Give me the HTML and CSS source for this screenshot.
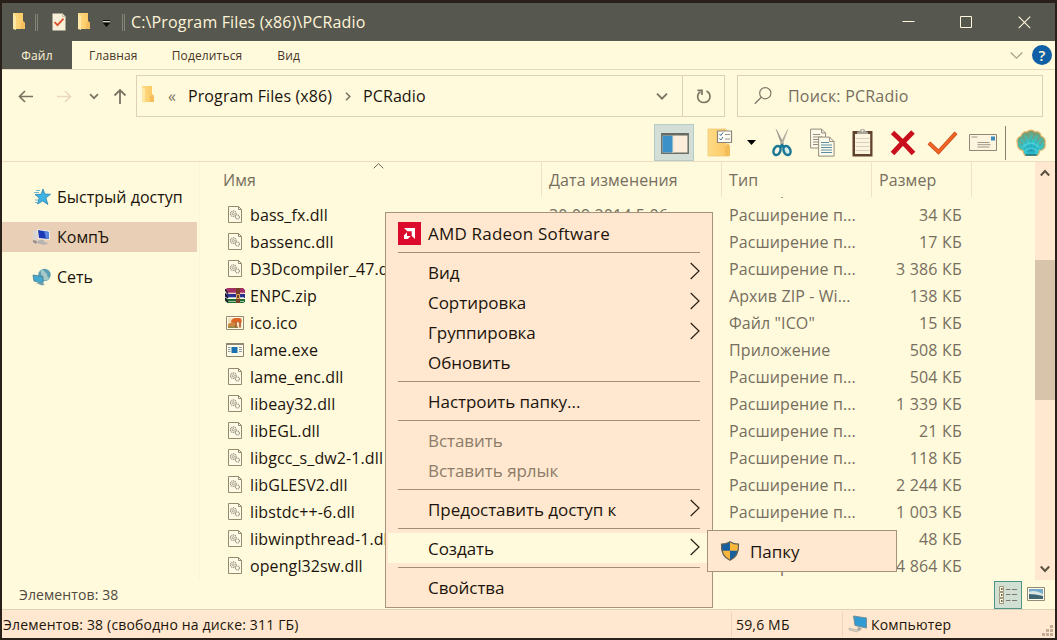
FILE: index.html
```
<!DOCTYPE html>
<html lang="ru">
<head>
    <meta charset="UTF-8">
    <title>C:\Program Files (x86)\PCRadio</title>
    <link rel="stylesheet" href="styles.css">
</head>
<body>
    <svg class="sprite">
        <linearGradient id="gold" x1="0" x2="1"><stop offset="0" stop-color="#ffdc86"/><stop offset="1" stop-color="#fbc55f"/></linearGradient>
        <radialGradient id="shellFill" cx=".5" cy=".75" r=".7"><stop offset="0" stop-color="#1aa5c4"/><stop offset=".35" stop-color="#35c5cf"/><stop offset=".7" stop-color="#4bb8a4"/><stop offset="1" stop-color="#7d9a6e"/></radialGradient>
        <symbol id="folder" viewBox="0 0 14 18">
            <path d="M1 0h10v8l2 2v6H1z" fill="url(#gold)"/>
            <path d="M1 1l3 2v14l-3-1z" fill="#ffe7a6"/>
            <path d="M9 16V11l2-2.500 2 1.500v6z" fill="#f6bd5c"/>
        </symbol>
        <symbol id="dll" viewBox="0 0 20 20">
            <path d="M3.500 1.500h10l3 3v13h-13z" fill="#fffbe6" stroke="#958a6e"/>
            <path d="M13.500 1.500v3h3" fill="none" stroke="#958a6e"/>
            <circle cx="8.300" cy="8.700" r="2.800" fill="none" stroke="#97907f" stroke-width="1.200" stroke-dasharray="1.200 .6"/>
            <circle cx="8.300" cy="8.700" r="1.100" fill="none" stroke="#97907f" stroke-width=".8"/>
            <circle cx="12.400" cy="12" r="2" fill="none" stroke="#97907f" stroke-width="1.200" stroke-dasharray="1 .5"/>
        </symbol>
        <symbol id="zip" viewBox="0 0 20 20">
            <path d="M0 3l3-1h15l2 2v3H3z" fill="#a02f62"/>
            <path d="M1 5l3 1.500h15v1H3z" fill="#e0a0b5"/>
            <path d="M0 7l3 1h17v4H3L0 11z" fill="#2b3390"/>
            <path d="M2 10.500l2 .5h15v1H3z" fill="#b9bfdd"/>
            <path d="M0 12l3 1h17v3l-2 1H3l-3-2z" fill="#226b35"/>
            <path d="M3 15h16v1H3z" fill="#9cc295"/>
            <path d="M0 3.500l3 4M0 8l3 4M0 12l3 4.500" stroke="#22182a" stroke-width="1.500"/>
            <path d="M11 2h4v15h-4z" fill="#7a3f28"/>
            <path d="M11.500 8.500h3v4h-3z" fill="none" stroke="#d6ad5a"/>
        </symbol>
        <symbol id="ico" viewBox="0 0 20 20">
            <path d="M1.500 3.500h17v13h-17z" fill="#fffbe6" stroke="#958a6e"/>
            <path d="M3 5h14v10H3z" fill="#f6e3bd"/>
            <path d="M6 9c0-2 2-4 5-4h4c2 1 2 3 1 5l-4-1-4 2z" fill="#dd6424"/>
            <path d="M3 11l5-2 4 3-3 3H3z" fill="#ce8740"/>
            <path d="M3 13.500h10V15H3z" fill="#8d8a4c"/>
            <path d="M11 9v5.500M15 9v5.500" stroke="#a8532b" stroke-width="1.500"/>
        </symbol>
        <symbol id="exe" viewBox="0 0 20 20">
            <path d="M1.500 3.500h17v13h-17z" fill="#fffbe6" stroke="#8b8572"/>
            <path d="M1.500 4h17" stroke="#8b8572" stroke-width="2"/>
            <path d="M6.500 7h6v6h-6z" fill="#1a70b0"/>
            <path d="M3 7.500h2.500M3 9.500h2.500M3 11.500h2.500M14 7.500h3M14 9.500h3M14 11.500h3" stroke="#8f99a0"/>
        </symbol>
        <symbol id="sub" viewBox="0 0 10 18"><path d="M.7 1l8.300 8-8.300 8" fill="none" stroke="#2a1f14" stroke-width="1.200"/></symbol>
    </svg>

    <div class="window">
        <div class="titlebar">
            <svg class="title-folder" width="14" height="18"><use href="#folder"/></svg>
            <span class="divider"></span>
            <svg class="title-check" width="14" height="18" viewBox="0 0 14 18">
                <path d="M.5.5h10l3 3v14H.5z" fill="#f8efd8"/>
                <path d="M10.500.5v3h3" fill="none" stroke="#c9bb9a"/>
                <path d="M2.500 9l3 3.200 6-6.500" fill="none" stroke="#d9512c" stroke-width="1.800"/>
            </svg>
            <svg class="title-new" width="14" height="18"><use href="#folder"/></svg>
            <svg class="title-more" width="9" height="8" viewBox="0 0 9 8">
                <path d="M1 .5h7" stroke="#0c0c0a"/>
                <path d="M1 1.500h7" stroke="#d9d5c0"/>
                <path d="M1 3h7L4.500 7z" fill="#0c0c0a"/>
            </svg>
            <span class="divider"></span>
            <span class="title">C:\Program Files (x86)\PCRadio</span>
            <div class="controls">
                <svg width="13" height="13"><path d="M.5 5.500h12" stroke="#fff8dc"/></svg>
                <svg width="13" height="13"><path d="M.5.5h11v11H.5z" fill="none" stroke="#fff8dc"/></svg>
                <svg width="13" height="13"><path d="M.7.700l11.500 11.500M12.200.7L.7 12.200" stroke="#fff8dc" stroke-width="1.100"/></svg>
            </div>
        </div>

        <div class="ribbon">
            <span class="tab file">Файл</span>
            <span class="tab home">Главная</span>
            <span class="tab share">Поделиться</span>
            <span class="tab view">Вид</span>
            <svg class="expand" width="13" height="9"><path d="M.7 1.500l5.800 5.700 5.800-5.700" fill="none" stroke="#a99f8a" stroke-width="1.200"/></svg>
            <span class="help">?</span>
        </div>

        <div class="address-row">
            <div class="nav">
                <svg width="16" height="14" viewBox="0 0 16 14"><path d="M15 7.500H1.500M7 2L1.500 7.500 7 13" fill="none" stroke="#7c7462" stroke-width="1.700"/></svg>
                <svg width="16" height="14" viewBox="0 0 16 14"><path d="M1 7.500h13.500M9 2L14.500 7.500 9 13" fill="none" stroke="#ecd9bd" stroke-width="1.600"/></svg>
                <svg width="10" height="8" viewBox="0 0 10 8"><path d="M1 2.200l4 4 4-4" fill="none" stroke="#7c7462" stroke-width="1.700"/></svg>
                <svg width="14" height="16" viewBox="0 0 14 16"><path d="M7 16V2M1.500 7.500L7 2 12.500 7.500" fill="none" stroke="#7c7462" stroke-width="1.800"/></svg>
            </div>
            <div class="address">
                <svg class="addr-folder" width="14" height="18"><use href="#folder"/></svg>
                <span class="back-crumbs">«</span>
                <span class="crumb">Program Files (x86)</span>
                <svg class="crumb-arrow" width="6" height="9"><path d="M1 .7L4.800 4.500 1 8.300" fill="none" stroke="#7c7462" stroke-width="1.600"/></svg>
                <span class="crumb">PCRadio</span>
                <svg class="addr-down" width="12" height="8"><path d="M1 1.700l5 5 5-5" fill="none" stroke="#7c7462" stroke-width="1.900"/></svg>
                <div class="refresh">
                    <svg width="16" height="16" viewBox="0 0 16 16"><path d="M4.500 4C2.500 5 1.500 7 1.700 9.300c.4 3 3 5.200 6.300 5.200s6-2.500 6-5.800C14 6 12.500 4 10.500 3M1.500 2.300H6V7" fill="none" stroke="#7c7462" stroke-width="1.700"/></svg>
                </div>
            </div>
            <div class="search">
                <svg width="18" height="18" viewBox="0 0 18 18"><circle cx="11.300" cy="6.200" r="5.600" fill="none" stroke="#80786a" stroke-width="1.200"/><path d="M7.300 10.200L.8 16.700" stroke="#80786a" stroke-width="1.300"/></svg>
                <span>Поиск: PCRadio</span>
            </div>
        </div>

        <div class="toolbar">
            <div class="tool panes">
                <svg width="28" height="21" viewBox="0 0 28 21">
                    <path d="M.8.8h26.400v19.400H.8z" fill="#fdeedb" stroke="#6b6f66" stroke-width="1.500"/>
                    <path d="M1.500 2.500h10.500v17H1.500z" fill="#3c92c8"/>
                    <path d="M12 2v18" stroke="#e5e2d0"/>
                    <path d="M1 1.500h26" stroke="#676a62" stroke-width="2"/>
                </svg>
            </div>
            <svg class="tool organize" width="26" height="29" viewBox="0 0 26 29">
                <path d="M1 1h18v16l3 3v8H1z" fill="url(#gold)" stroke="#f0c878" stroke-width=".8"/>
                <path d="M18 28v-9l3-4 2 3v10z" fill="#f3bd59"/>
                <path d="M10.500 3h14v11.500h-14z" fill="#fffdf3" stroke="#8a8578" stroke-width="1.200"/>
                <path d="M12.500 6l1.300 1.500 2.200-3M12.500 10.500l1.300 1.500 2.200-3" fill="none" stroke="#3a6ea8"/>
                <path d="M18 6.500h5M18 11h5" stroke="#99948a"/>
            </svg>
            <svg class="tool more" width="9" height="5"><path d="M0 0h9L4.500 5z" fill="#000"/></svg>
            <svg class="tool cut" width="20" height="29" viewBox="0 0 20 29">
                <path d="M3.500.5L5 2l7 14-2.500 1z" fill="#9c9890"/>
                <path d="M16.500.5L15 2 8 16l2.500 1z" fill="#b4afa3"/>
                <ellipse cx="5" cy="22.500" rx="3.300" ry="4.700" transform="rotate(22 5 22.500)" fill="#fbf7e4" stroke="#1a7796" stroke-width="2.500"/>
                <ellipse cx="15" cy="22.500" rx="3.300" ry="4.700" transform="rotate(-22 15 22.500)" fill="#d8f0ec" stroke="#1a7796" stroke-width="2.500"/>
                <path d="M6 18.500l4-3 4 3-4 1.500z" fill="#1a7796"/>
            </svg>
            <svg class="tool copy" width="25" height="29" viewBox="0 0 25 29">
                <path d="M.6 1.100h11l4 4V20H.6z" fill="#fffbea" stroke="#948d7d"/>
                <path d="M11.600 1v4h4M3 6.500h7M3 9h10M3 11.500h10M3 14h6M3 16.500h5" fill="none" stroke="#948d7d"/>
                <path d="M8.600 9.100h11l4.500 4.500v14.500H8.600z" fill="#fffbea" stroke="#948d7d"/>
                <path d="M19.600 9v4.500h4.500" fill="none" stroke="#948d7d"/>
                <path d="M11 14.500h8M11 17h11M11 19.500h11M11 22h11M11 24.500h11" stroke="#5a8ca6"/>
            </svg>
            <svg class="tool paste" width="21" height="29" viewBox="0 0 21 29">
                <path d="M.5 3h20v25.500H.5z" fill="#60432f"/>
                <path d="M3 6h15.200v20H3z" fill="#fbf4df"/>
                <path d="M3.500 10.500h14M3.500 14.500h14M3.500 18.500h14M3.500 22.500h14" stroke="#ddceb9"/>
                <path d="M5 6V4l3-1c0-3 5-3 5 0l3 1v2z" fill="#a8a49a"/>
                <circle cx="10.500" cy="2.500" r="1" fill="#fffadc"/>
            </svg>
            <svg class="tool delete" width="26" height="26" viewBox="0 0 26 26"><path d="M2.500 2.500Q12 11 23.500 23.500M23 2Q14 11 2.500 23.500" fill="none" stroke="#c90f1c" stroke-width="5"/></svg>
            <svg class="tool rename" width="31" height="24" viewBox="0 0 31 24"><path d="M2 12l9.500 9L29 1.800" fill="none" stroke="#c64d20" stroke-width="4"/><path d="M2 12l9.500 9L29 1.800" fill="none" stroke="#f06424" stroke-width="2.600"/></svg>
            <svg class="tool mail" width="28" height="17" viewBox="0 0 28 17">
                <path d="M.5.5h27v16H.5z" fill="#fdf5df" stroke="#8f8877"/>
                <path d="M22 2.500h4v4h-4z" fill="#3d8bc0"/>
                <path d="M2.500 3h6M8.500 8.500h12M8.500 10.700h13M8.500 13h12" stroke="#a09888"/>
            </svg>
            <span class="tool-sep"></span>
            <svg class="tool shell" width="30" height="28" viewBox="0 0 30 28">
                <path d="M9 26.500c-1-1-2-2.500-2-5-4 0-6-4-5.500-7C0 11 2 8 5 7c1-3 4-5 6-4 2-2.500 6-2.500 8 0 3-1 6 1 6 4 3 1 5 4 4 7 1 4-1 7.500-5.500 7.500 0 2-1 4-2 5z" fill="url(#shellFill)" stroke="#e6b36a" stroke-width="1.200"/>
                <path d="M7 15L3 12M9 12L7 7.500M13 10l-1.500-6M17 10l1.500-6M21 12l3-4.500M23 15l4-3" stroke="#a77f58" opacity=".7"/>
                <path d="M13 24L5 15M14 23L9 12M15 23V10M16 23l5-11M17 24l8-9" stroke="#2b9aa5" opacity=".6"/>
                <path d="M7 18q8-8 16 0M9 22q6-6 12 0" fill="none" stroke="#58dce0" stroke-width="1.200" opacity=".7"/>
                <path d="M9.500 26h11" stroke="#17707d" stroke-width="1.500"/>
            </svg>
        </div>

        <div class="content">
            <div class="sidebar">
                <div class="place">
                    <svg width="20" height="20" viewBox="0 0 20 20"><path d="M11 2l1.800 5 5.700.3-4.600 3.600 2 6.600-5.200-3.500-5.200 3 1.700-6L3 7.500l6-.2z" fill="#3fb4e2" stroke="#2a83b2" stroke-width=".8"/><path d="M4 3.500h4M2 5.500h5M3 13h3M3 15.500h2" stroke="#70b7ce"/></svg>
                    <span>Быстрый доступ</span>
                </div>
                <div class="place selected">
                    <svg width="20" height="20" viewBox="0 0 20 20"><path d="M1 4l4-1v12l-4-3z" fill="#d9d6d1"/><path d="M5 2l13 2v9L6 12z" fill="#f0ece6"/><path d="M6 3l11 2v7L7 11z" fill="#1b39b5"/><path d="M12 4l5 1v7l-3-.4z" fill="#5a83e0"/><path d="M7 13l5 0v2l5 1-5 2-8-2z" fill="#b8b4b2"/><path d="M1 13l4 1-1 3-3-2z" fill="#948d8b"/></svg>
                    <span>КомпЪ</span>
                </div>
                <div class="place">
                    <svg width="20" height="20" viewBox="0 0 20 20"><circle cx="12.500" cy="8" r="6.200" fill="#5d9eb5"/><path d="M9 3c3-1 3 2 5 3s0 4 4 5c-2 3-6 3-8 1 1-3-2-5-1-9z" fill="#a5c9c6"/><path d="M1 8l10 1.500v7L2 14z" fill="#45aad0" stroke="#47788f" stroke-width=".8"/><path d="M4 16l6 2.500 3-1-3-1.500z" fill="#7a9faa"/></svg>
                    <span>Сеть</span>
                </div>
            </div>

            <div class="files">
                <div class="columns">
                    <svg class="sort" width="11" height="6"><path d="M.7 5.300l4.800-4.600 4.800 4.600" fill="none" stroke="#6f675a"/></svg>
                    <span class="col name">Имя</span>
                    <span class="col date">Дата изменения</span>
                    <span class="col type">Тип</span>
                    <span class="col size">Размер</span>
                </div>
                <div class="rows">
                    <div class="row"><span class="name"></span><span class="date"></span><span class="type">Расширение п...</span><span class="size"></span></div>
                    <div class="row"><span class="name"><svg><use href="#dll"/></svg>bass_fx.dll</span><span class="date">30.09.2014 5:06</span><span class="type">Расширение п...</span><span class="size">34 КБ</span></div>
                    <div class="row"><span class="name"><svg><use href="#dll"/></svg>bassenc.dll</span><span class="date"></span><span class="type">Расширение п...</span><span class="size">17 КБ</span></div>
                    <div class="row"><span class="name"><svg><use href="#dll"/></svg>D3Dcompiler_47.dll</span><span class="date"></span><span class="type">Расширение п...</span><span class="size">3 386 КБ</span></div>
                    <div class="row"><span class="name"><svg><use href="#zip"/></svg>ENPC.zip</span><span class="date"></span><span class="type">Архив ZIP - Wi...</span><span class="size">138 КБ</span></div>
                    <div class="row"><span class="name"><svg><use href="#ico"/></svg>ico.ico</span><span class="date"></span><span class="type">Файл "ICO"</span><span class="size">15 КБ</span></div>
                    <div class="row"><span class="name"><svg><use href="#exe"/></svg>lame.exe</span><span class="date"></span><span class="type">Приложение</span><span class="size">508 КБ</span></div>
                    <div class="row"><span class="name"><svg><use href="#dll"/></svg>lame_enc.dll</span><span class="date"></span><span class="type">Расширение п...</span><span class="size">504 КБ</span></div>
                    <div class="row"><span class="name"><svg><use href="#dll"/></svg>libeay32.dll</span><span class="date"></span><span class="type">Расширение п...</span><span class="size">1 339 КБ</span></div>
                    <div class="row"><span class="name"><svg><use href="#dll"/></svg>libEGL.dll</span><span class="date"></span><span class="type">Расширение п...</span><span class="size">21 КБ</span></div>
                    <div class="row"><span class="name"><svg><use href="#dll"/></svg>libgcc_s_dw2-1.dll</span><span class="date"></span><span class="type">Расширение п...</span><span class="size">118 КБ</span></div>
                    <div class="row"><span class="name"><svg><use href="#dll"/></svg>libGLESV2.dll</span><span class="date"></span><span class="type">Расширение п...</span><span class="size">2 244 КБ</span></div>
                    <div class="row"><span class="name"><svg><use href="#dll"/></svg>libstdc++-6.dll</span><span class="date"></span><span class="type">Расширение п...</span><span class="size">1 003 КБ</span></div>
                    <div class="row"><span class="name"><svg><use href="#dll"/></svg>libwinpthread-1.dll</span><span class="date"></span><span class="type">Расширение п...</span><span class="size">48 КБ</span></div>
                    <div class="row"><span class="name"><svg><use href="#dll"/></svg>opengl32sw.dll</span><span class="date"></span><span class="type">Расширение п...</span><span class="size">14 864 КБ</span></div>
                </div>
            </div>

            <div class="scrollbar">
                <svg width="10" height="8"><path d="M.8 6.500L5 2l4.200 4.500" fill="none" stroke="#5c5242" stroke-width="2"/></svg>
                <div class="thumb"></div>
                <svg width="10" height="8"><path d="M.8 1.500L5 6l4.200-4.500" fill="none" stroke="#5c5242" stroke-width="2"/></svg>
            </div>
        </div>

        <div class="details">
            <span class="count">Элементов: 38</span>
            <div class="view-list">
                <svg width="20" height="18" viewBox="0 0 20 18">
                    <path d="M1.500.5h4v5h-4zM1.500 6.500h4v5h-4zM1.500 12.500h4v5h-4z" fill="#fffadc" stroke="#a1957a"/>
                    <path d="M3 3h1.500M3 9h1.500M3 15h1.500" stroke="#333" stroke-width="1.500"/>
                    <path d="M8 3.500h4.500M14 3.500h5M8 8.500h4.500M14 8.500h5M8 14.500h4.500M14 14.500h5" stroke="#7e796c"/>
                </svg>
            </div>
            <svg class="view-thumbs" width="18" height="14" viewBox="0 0 18 14">
                <path d="M.5.5h17v13H.5z" fill="#fffbe6" stroke="#928b77"/>
                <path d="M2 2h14v5H2z" fill="#74aacb"/><path d="M2 5q5-3 14 2v2H2z" fill="#d9e6e2"/><path d="M2 7q6 0 14 2v3H2z" fill="#3f6573"/>
            </svg>
        </div>

        <div class="statusbar">
            <span class="status-main">Элементов: 38 (свободно на диске: 311 ГБ)</span>
            <span class="status-size">59,6 МБ</span>
            <span class="status-zone">
                <svg width="20" height="18" viewBox="0 0 20 18"><path d="M5.500 1l13 2v10L7 10.500z" fill="#2f9bd2" stroke="#7a8d94"/><path d="M10 12l4 1-2 3-3-1z" fill="#a7aaa5"/><path d="M1 13l10 2.500-2 1.500-8-2z" fill="#d3cdbf" stroke="#b4ad9e" stroke-width=".6"/></svg>
                Компьютер
            </span>
            <svg class="grip" width="11" height="11"><path d="M8 0h3v3H8zM4 4h3v3H4zM8 4h3v3H8zM0 8h3v3H0zM4 8h3v3H4zM8 8h3v3H8z" fill="#c5ae95"/></svg>
        </div>
    </div>

    <div class="menu">
        <div class="item amd">
            <svg width="23" height="23" viewBox="0 0 23 23"><path d="M0 0h23v23H0z" fill="#dc0a2c"/><path d="M6 6h11v11l-3.300-3.300V9.300H9.300z" fill="#fff"/><path d="M9 10.300V14h3.700L9.800 17H6v-3.700z" fill="#fff"/></svg>
            <span>AMD Radeon Software</span>
        </div>
        <div class="line"></div>
        <div class="item">Вид<svg class="arrow"><use href="#sub"/></svg></div>
        <div class="item">Сортировка<svg class="arrow"><use href="#sub"/></svg></div>
        <div class="item">Группировка<svg class="arrow"><use href="#sub"/></svg></div>
        <div class="item">Обновить</div>
        <div class="line"></div>
        <div class="item">Настроить папку...</div>
        <div class="line"></div>
        <div class="item disabled">Вставить</div>
        <div class="item disabled">Вставить ярлык</div>
        <div class="line"></div>
        <div class="item">Предоставить доступ к<svg class="arrow"><use href="#sub"/></svg></div>
        <div class="line"></div>
        <div class="item active">Создать<svg class="arrow"><use href="#sub"/></svg></div>
        <div class="line"></div>
        <div class="item">Свойства</div>
    </div>

    <div class="submenu">
        <svg width="20" height="20" viewBox="0 0 20 20">
            <path d="M10 .8c3 2 5.500 2.400 8.500 2.400C19 11 16 16.500 10 19.300 4 16.500 1 11 1.500 3.200 4.500 3.200 7 2.800 10 .8z" fill="#f9b83c"/>
            <path d="M10 .8C7 2.800 4.500 3.200 1.500 3.200c-.1 2.500.1 4.600.7 6.600H10zM10 9.800h7.800c-1.200 4.500-3.800 7.700-7.800 9.500z" fill="#175f9e"/>
            <path d="M10 .8c3 2 5.500 2.400 8.500 2.400C19 11 16 16.500 10 19.300 4 16.500 1 11 1.500 3.200 4.500 3.200 7 2.800 10 .8z" fill="none" stroke="#5f6157" stroke-width="1.200"/>
        </svg>
        <span>Папку</span>
    </div>
</body>
</html>
```
FILE: styles.css
```
* {
    box-sizing: border-box;
}
body {
    margin: 0;
    width: 1057px;
    height: 640px;
    overflow: hidden;
    background-color: #2a201a;
    color: #1c140c;
    font-family: "Open Sans", "Noto Sans", sans-serif;
    font-size: 16px;
    letter-spacing: 0.1px;
    white-space: nowrap;
}
svg {
    flex: none;
    display: block;
}
.sprite {
    position: absolute;
    width: 0;
    height: 0;
}
.window {
    width: 1053px;
    height: 635px;
    margin: 3px 2px 2px;
    background-color: #fffadc;
    display: flex;
    flex-direction: column;
}

/* title bar */
.titlebar {
    height: 38px;
    background-color: #56584f;
    color: #fff4d8;
    display: flex;
    align-items: center;
    padding-left: 10px;
}
.divider {
    width: 3px;
    height: 17px;
    border: solid #85857a;
    border-width: 0 1px;
}
.title-folder {
    margin-right: 9px;
}
.title-check {
    margin-left: 14px;
}
.title-new {
    margin-left: 11px;
}
.title-more {
    margin: 4px 11px 0 11px;
}
.title {
    margin-left: 6px;
    letter-spacing: 0.15px;
}
.controls {
    display: flex;
    gap: 45px;
    margin-left: auto;
    margin-right: 24px;
}

/* ribbon */
.ribbon {
    height: 29px;
    border-bottom: 1px solid #e3d7bd;
    display: flex;
    align-items: center;
    font-size: 12px;
    letter-spacing: 0.15px;
    color: #4a3529;
}
.tab {
    line-height: 28px;
    padding-top: 1px;
    height: 28px;
}
.file {
    width: 70px;
    text-align: center;
    background-color: #56584f;
    color: #fff4d8;
}
.home {
    margin-left: 17px;
}
.share {
    margin-left: 34px;
}
.view {
    margin-left: 35px;
}
.expand {
    margin-left: auto;
}
.help {
    width: 20px;
    height: 20px;
    margin: 0 3px 0 9px;
    border-radius: 50%;
    background-color: #0f5fa6;
    color: #fff4d8;
    font-size: 15px;
    font-weight: 600;
    line-height: 20px;
    text-align: center;
}

/* address and search */
.address-row {
    height: 52px;
    padding-top: 5px;
    display: flex;
}
.nav {
    width: 134px;
    height: 42px;
    padding-left: 16px;
    display: flex;
    align-items: center;
}
.nav svg:nth-child(2) {
    margin-left: 22px;
}
.nav svg:nth-child(3) {
    margin-left: 17px;
}
.nav svg:nth-child(4) {
    margin-left: 14px;
}
.address {
    width: 589px;
    height: 42px;
    border: 1px solid #ddd1b5;
    display: flex;
    align-items: center;
}
.addr-folder {
    margin: 0 13px 3px 4px;
}
.back-crumbs {
    width: 20px;
    color: #7c7462;
}
.crumb-arrow {
    margin: 0 12px 0 13px;
}
.addr-down {
    margin-left: auto;
    margin-right: 14px;
}
.refresh {
    width: 42px;
    height: 40px;
    border-left: 1px solid #ddd1b5;
    display: flex;
    align-items: center;
    justify-content: center;
}
.search {
    width: 306px;
    height: 42px;
    margin-left: 12px;
    padding-left: 16px;
    border: 1px solid #ddd1b5;
    display: flex;
    align-items: center;
    gap: 16px;
    color: #766e5e;
    letter-spacing: 0.2px;
}

/* toolbar */
.toolbar {
    height: 40px;
    border-bottom: 1px solid #eddcc0;
    display: flex;
    align-items: center;
    padding: 2px 9px 0 652px;
}
.panes {
    width: 40px;
    height: 37px;
    background-color: #d3dfd6;
    border: 1px solid #b5cbc8;
    display: flex;
    align-items: center;
    justify-content: center;
    padding: 1px 0 0 1px;
}
.organize {
    margin-left: 13px;
}
.more {
    margin-left: 14px;
}
.cut {
    margin-left: 16px;
}
.copy {
    margin-left: 18px;
}
.paste {
    margin-left: 17px;
}
.delete {
    margin-left: 17px;
}
.rename {
    margin-left: 11px;
}
.mail {
    margin-left: 11px;
}
.tool-sep {
    width: 1px;
    height: 34px;
    margin: 0 10px 0 8px;
    background-color: #88816f;
}

/* main area */
.content {
    height: 418px;
    display: flex;
}
.sidebar {
    width: 198px;
    padding-top: 20px;
    border-right: 1px solid #fdf3d6;
}
.place {
    width: 195px;
    height: 30px;
    margin-bottom: 10px;
    padding-left: 30px;
    display: flex;
    align-items: center;
    gap: 5px;
    letter-spacing: 0;
}
.place.selected {
    background-color: #e9cfb6;
}
.files {
    flex: 1;
    overflow: hidden;
}
.columns {
    height: 35px;
    position: relative;
    display: flex;
    color: #766e5e;
    line-height: 37px;
}
.col {
    border-right: 1px solid #f0e2c6;
}
.sort {
    position: absolute;
    left: 173px;
    top: 1px;
}
.columns .name {
    width: 342px;
    padding-left: 23px;
}
.columns .date {
    width: 180px;
    padding-left: 7px;
}
.columns .type {
    width: 150px;
    padding-left: 7px;
}
.columns .size {
    width: 100px;
    padding-left: 7px;
}
.rows {
    height: 383px;
    overflow: hidden;
}
.row {
    height: 27px;
    display: flex;
    align-items: center;
    color: #766e5e;
}
.row:first-child {
    margin-top: -23px;
}
.row .name {
    width: 349px;
    padding-left: 25px;
    display: flex;
    align-items: center;
    gap: 5px;
    color: #1c140c;
}
.row .name svg {
    width: 20px;
    height: 20px;
}
.row .date {
    width: 180px;
}
.row .type {
    width: 143px;
}
.row .size {
    width: 90px;
    text-align: right;
    letter-spacing: 0.2px;
}
.scrollbar {
    width: 20px;
    background-color: #ffe8cf;
    display: flex;
    flex-direction: column;
    align-items: center;
    padding: 7px 0;
}
.thumb {
    width: 20px;
    height: 140px;
    margin-top: 83px;
    margin-bottom: auto;
    background-color: #d8c3ab;
}

/* details and status */
.details {
    height: 29px;
    display: flex;
    align-items: center;
    padding-left: 17px;
    font-size: 14px;
    color: #50493c;
}
.view-list {
    width: 28px;
    height: 28px;
    margin-left: auto;
    background-color: #d1e0d2;
    border: 1px solid #4f9488;
    display: flex;
    align-items: center;
    justify-content: center;
}
.view-thumbs {
    margin: 0 10px 1px 5px;
}
.statusbar {
    flex: 1;
    border-top: 1px solid #e0d3b8;
    background-color: #ffe8cf;
    display: flex;
    align-items: center;
    font-size: 14px;
    letter-spacing: 0.17px;
}
.status-main {
    width: 729px;
    padding-left: 1px;
}
.status-size {
    width: 111px;
    height: 25px;
    line-height: 25px;
    padding-left: 4px;
    border-left: 1px solid #ecd7bb;
}
.status-zone {
    height: 25px;
    padding-left: 5px;
    border-left: 1px solid #ecd7bb;
    display: flex;
    align-items: center;
    gap: 3px;
}
.grip {
    margin-left: auto;
    margin-right: 2px;
    margin-top: 12px;
}

/* context menu */
.menu {
    position: absolute;
    left: 385px;
    top: 212px;
    width: 328px;
    height: 396px;
    padding: 2px;
    background-color: #ffe8cf;
    border: 1px solid #a6937b;
    font-size: 17px;
    letter-spacing: -0.05px;
}
.item {
    height: 30px;
    padding: 1px 10px 0 40px;
    display: flex;
    align-items: center;
}
.amd {
    height: 37px;
    padding: 0 0 1px 10px;
    gap: 7px;
    letter-spacing: 0.2px;
}
.item.disabled {
    color: #8c7c69;
}
.item.active {
    background-color: #fffadc;
}
.arrow {
    width: 10px;
    height: 18px;
    margin-left: auto;
    margin-bottom: 3px;
}
.line {
    height: 1px;
    margin: 4px 10px;
    background-color: #a38e77;
}
.amd + .line {
    margin: 0 10px 4px;
}
.submenu {
    position: absolute;
    left: 707px;
    top: 530px;
    width: 190px;
    height: 42px;
    padding-left: 12px;
    background-color: #ffe8cf;
    border: 1px solid #a6937b;
    display: flex;
    align-items: center;
    gap: 10px;
    font-size: 17px;
    letter-spacing: -0.05px;
}
```
